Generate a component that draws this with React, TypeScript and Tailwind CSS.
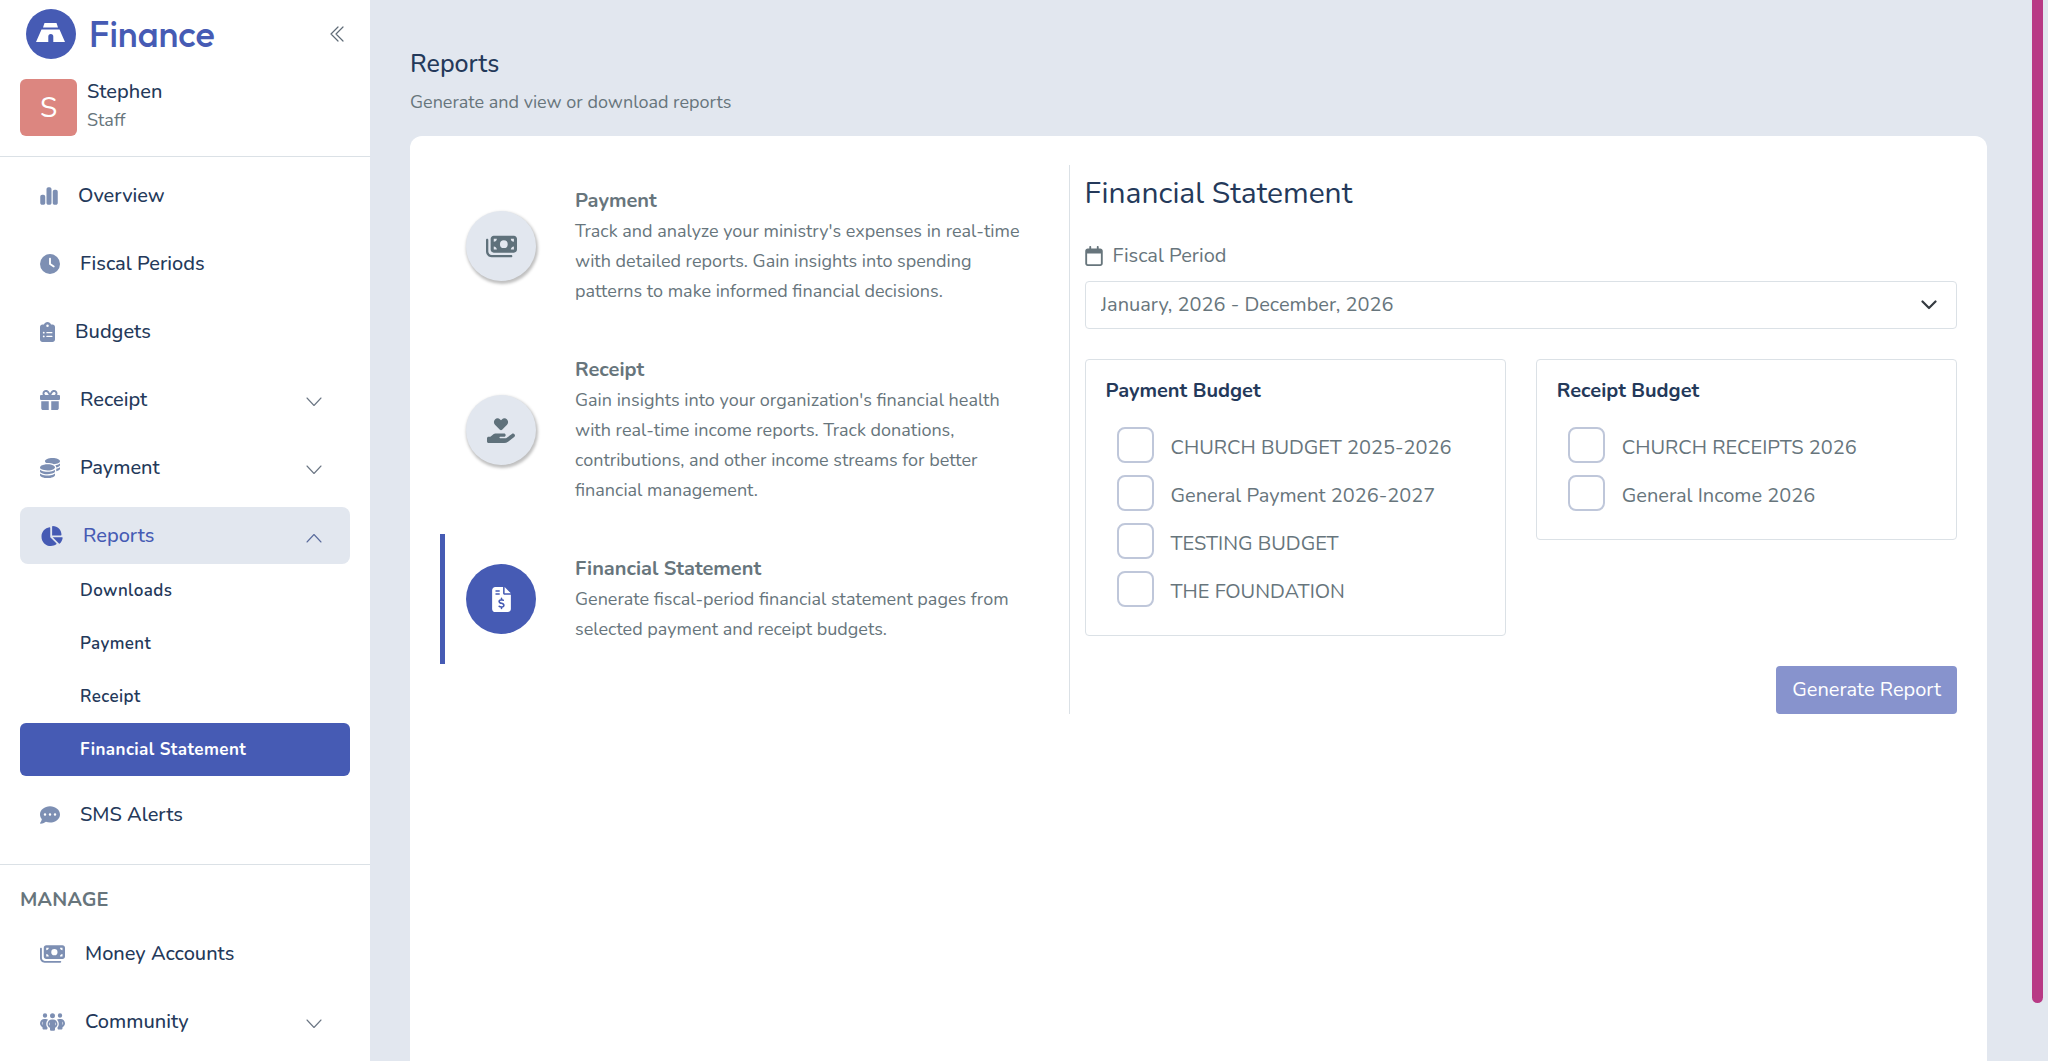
import { useState, type ReactNode } from "react";
import {
  FaChartPie,
  FaChartSimple,
  FaClipboardList,
  FaClock,
  FaCoins,
  FaCommentDots,
  FaFileInvoiceDollar,
  FaGift,
  FaHandHoldingHeart,
  FaMoneyBills,
  FaPeopleGroup,
  FaRegCalendar,
} from "react-icons/fa6";

interface NavItemProps {
  icon: ReactNode;
  label: string;
  expandable?: boolean;
  open?: boolean;
  onClick?: () => void;
}

function Chevron({ up = false }: { up?: boolean }) {
  return (
    <svg viewBox="0 0 16 10" className="h-[10px] w-4" fill="none" stroke="currentColor" strokeWidth="1.1" strokeLinecap="round" strokeLinejoin="round">
      <path d={up ? "M1 9 8 1.5 15 9" : "M1 1 8 8.5 15 1"} />
    </svg>
  );
}

function NavItem({ icon, label, expandable, open, onClick }: NavItemProps) {
  const className = `flex h-[57px] w-full items-center rounded-lg pr-7 pl-5 text-left ${open ? "bg-[#e2e7ef] text-[#465bb4]" : "text-[#24395a]"}`;
  const body = (
    <>
      <span className={`mr-5 ${open ? "text-[#465bb4]" : "text-[#7d8fb3]"}`}>{icon}</span>
      <span className="flex-1 font-medium">{label}</span>
      {expandable && <span className={`mt-1 ${open ? "text-[#5a6b9c]" : "text-[#6b7684]"}`}><Chevron up={open} /></span>}
    </>
  );
  return expandable ? <button type="button" onClick={onClick} aria-expanded={!!open} className={className}>{body}</button> : <a href="#" className={className}>{body}</a>;
}

function Logo() {
  return (
    <svg viewBox="0 0 50 50" className="h-[50px] w-[50px]">
      <circle cx="25" cy="25" r="25" fill="#465bb4" />
      <path d="M18.5 14H30.5L32 18.500H17Z" fill="#fff" />
      <path d="M15.500 20.500H33.500L39 33H27.300V27.500A2.300 2.300 0 0 0 22.300 27.500V33H10Z" fill="#fff" />
    </svg>
  );
}

const reportPages = ["Downloads", "Payment", "Receipt", "Financial Statement"];

function Sidebar() {
  const [reportsOpen, setReportsOpen] = useState(true);

  return (
    <aside className="w-[370px] shrink-0 bg-white">
      <div className="flex items-center pt-[9px] pr-[26px] pl-[26px]">
        <Logo />
        <span className="ml-[13px] flex-1 font-[Outfit,Nunito,sans-serif] text-[36px] leading-[48px] font-medium text-[#465bb4]">Finance</span>
        <button type="button" aria-label="Collapse sidebar" className="text-[#5f6b76]">
          <svg viewBox="0 0 14 16" className="h-4 w-[14px]" fill="none" stroke="currentColor" strokeWidth="1.2" strokeLinecap="round" strokeLinejoin="round">
            <path d="M8 1 1 8l7 7M13 1 6 8l7 7" />
          </svg>
        </button>
      </div>
      <div className="flex gap-[10px] border-b border-[#dbe1e6] px-5 py-5">
        <div className="flex h-[57px] w-[57px] items-center justify-center rounded-md bg-[#dc8680] text-[28px] text-white">S</div>
        <div className="-mt-px leading-7">
          <p className="font-medium text-[#24395a]">Stephen</p>
          <p className="text-[18px] text-[#67757c]">Staff</p>
        </div>
      </div>
      <nav className="border-b border-[#dbe1e6] px-5 pt-[10px] pb-[21px]">
        <div className="flex flex-col gap-[11px]">
          <NavItem icon={<FaChartSimple className="h-5 w-[18px]" />} label="Overview" />
          <NavItem icon={<FaClock className="h-5 w-5" />} label="Fiscal Periods" />
          <NavItem icon={<FaClipboardList className="h-5 w-[15px]" />} label="Budgets" />
          <NavItem icon={<FaGift className="h-5 w-5" />} label="Receipt" expandable />
          <NavItem icon={<FaCoins className="h-5 w-5" />} label="Payment" expandable />
          <NavItem icon={<FaChartPie className="h-5 w-[23px]" />} label="Reports" expandable open={reportsOpen} onClick={() => setReportsOpen(!reportsOpen)} />
        </div>
        {reportsOpen && (
          <ul className="mb-[10px]">
            {reportPages.map((page) => (
              <li key={page}>
                <a href="#" className={`flex h-[53px] items-center rounded-md pl-[60px] text-[17px] tracking-wide ${page === "Financial Statement" ? "bg-[#465bb4] font-bold text-white" : "font-semibold text-[#24395a]"}`}>{page}</a>
              </li>
            ))}
          </ul>
        )}
        <NavItem icon={<FaCommentDots className="h-5 w-5" />} label="SMS Alerts" />
      </nav>
      <nav className="px-5 pt-5">
        <h2 className="mb-[10px] font-bold text-[#67757c]">MANAGE</h2>
        <div className="flex flex-col gap-[11px]">
          <NavItem icon={<FaMoneyBills className="h-5 w-[25px]" />} label="Money Accounts" />
          <NavItem icon={<FaPeopleGroup className="h-5 w-[25px]" />} label="Community" expandable />
        </div>
      </nav>
    </aside>
  );
}

const reports = [
  {
    title: "Payment",
    icon: <FaMoneyBills className="h-[25px] w-[31px]" />,
    text: "Track and analyze your ministry's expenses in real-time with detailed reports. Gain insights into spending patterns to make informed financial decisions.",
  },
  {
    title: "Receipt",
    icon: <FaHandHoldingHeart className="h-[25px] w-[28px]" />,
    text: "Gain insights into your organization's financial health with real-time income reports. Track donations, contributions, and other income streams for better financial management.",
  },
  {
    title: "Financial Statement",
    icon: <FaFileInvoiceDollar className="h-[25px] w-[19px]" />,
    text: "Generate fiscal-period financial statement pages from selected payment and receipt budgets.",
  },
];

function ReportList() {
  const [selected, setSelected] = useState("Financial Statement");

  return (
    <div className="flex w-[41.5%] shrink-0 flex-col gap-[9px] border-r border-[#dbe1e6] pt-px">
      {reports.map((report) => {
        const active = report.title === selected;
        return (
          <button key={report.title} type="button" onClick={() => setSelected(report.title)} className={`flex items-center border-l-[5px] py-5 pr-10 pl-[21px] text-left ${active ? "border-[#465bb4]" : "border-transparent"}`}>
            <span className={`mr-[39px] flex h-[70px] w-[70px] shrink-0 items-center justify-center rounded-full ${active ? "bg-[#465bb4] text-white" : "bg-[#e2e7ef] text-[#5f717b] shadow-[1px_2px_3px_1px_rgba(0,0,0,0.25)]"}`}>{report.icon}</span>
            <span className="text-[#67757c]">
              <span className="block font-bold">{report.title}</span>
              <span className="block text-[18px]">{report.text}</span>
            </span>
          </button>
        );
      })}
    </div>
  );
}

function BudgetCard({ title, budgets }: { title: string; budgets: string[] }) {
  return (
    <fieldset className="rounded border border-[#dbe1e6] px-5 pt-4 pb-7">
      <legend className="float-left mb-[21px] w-full font-bold text-[#24395a]">{title}</legend>
      <div className="clear-both flex flex-col gap-3 pl-[11px]">
        {budgets.map((budget) => (
          <label key={budget} className="flex items-center gap-[17px]">
            <input type="checkbox" className="h-9 w-[37px] appearance-none rounded-lg border-2 border-[#bfc7da] checked:bg-[#465bb4]" />
            <span className="pt-[5px]">{budget}</span>
          </label>
        ))}
      </div>
    </fieldset>
  );
}

export default function App() {
  return (
    <div className="flex h-screen overflow-hidden bg-[#e2e7ef] font-[Nunito,Lato,sans-serif] text-[20px] leading-[30px] text-[#67757c]">
      <Sidebar />
      <main className="flex min-w-0 flex-1 flex-col pt-[49px] pr-[45px] pl-10">
        <h1 className="text-[25px] font-medium text-[#24395a]">Reports</h1>
        <p className="mt-2 text-[18px]">Generate and view or download reports</p>
        <div className="mt-[19px] flex-1 rounded-t-xl bg-white px-[30px] pt-[29px]">
          <div className="flex">
            <ReportList />
            <section className="flex-1 pl-[15px]">
              <h2 className="mt-[9px] text-[30px] leading-10 text-[#24395a]">Financial Statement</h2>
              <label htmlFor="fiscal-period" className="mt-[27px] flex items-center gap-[10px]"><FaRegCalendar className="h-5 w-[18px]" />Fiscal Period</label>
              <div className="relative mt-[10px]">
                <select id="fiscal-period" className="h-12 w-full appearance-none rounded border border-[#dbe1e6] bg-white px-[15px]">
                  <option>January, 2026 - December, 2026</option>
                </select>
                <svg viewBox="0 0 16 10" className="pointer-events-none absolute top-[19px] right-5 h-[10px] w-4" fill="none" stroke="#343a40" strokeWidth="2.200" strokeLinecap="round" strokeLinejoin="round">
                  <path d="m1.500 1.500 6.500 6.500 6.500-6.500" />
                </svg>
              </div>
              <div className="mt-[30px] grid grid-cols-2 items-start gap-[30px]">
                <BudgetCard title="Payment Budget" budgets={["CHURCH BUDGET 2025-2026", "General Payment 2026-2027", "TESTING BUDGET", "THE FOUNDATION"]} />
                <BudgetCard title="Receipt Budget" budgets={["CHURCH RECEIPTS 2026", "General Income 2026"]} />
              </div>
              <div className="mt-[30px] flex justify-end">
                <button type="button" className="h-12 rounded bg-[#8793cd] px-4 text-white">Generate Report</button>
              </div>
            </section>
          </div>
        </div>
      </main>
      <div className="mr-[5px] h-[1003px] w-[11px] shrink-0 rounded-b-full bg-[#b83a85]" />
    </div>
  );
}
